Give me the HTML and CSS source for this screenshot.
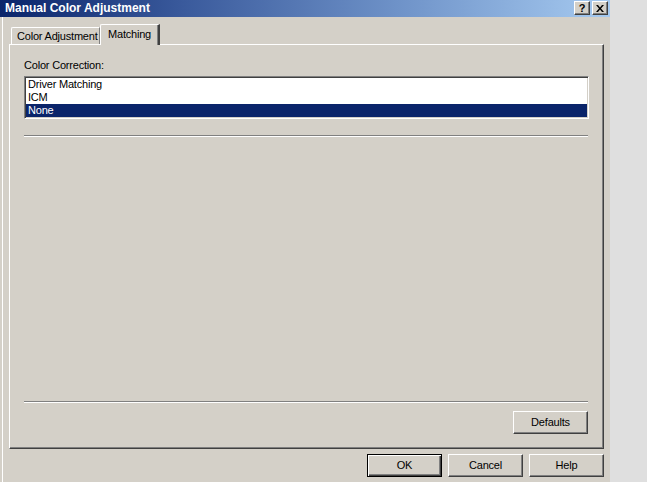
FILE: index.html
```html
<!DOCTYPE html>
<html>
<head>
<meta charset="utf-8">
<link rel="stylesheet" href="styles.css">
</head>
<body>
<div class="dialog">
  <div class="titlebar">
    <span class="title">Manual Color Adjustment</span>
    <div class="capbtns">
      <span class="capbtn help">?</span>
      <span class="capbtn close">
        <svg width="8" height="7" viewBox="0 0 8 7"><path d="M0 0h2l2 2.5L6 0h2L5 3.5 8 7H6L4 4.5 2 7H0l3-3.5z" fill="#000"/></svg>
      </span>
    </div>
  </div>
  <div class="content">
    <div class="tabs">
      <div class="tab">Color Adjustment</div>
      <div class="tab active">Matching</div>
    </div>
    <div class="panel">
      <div class="label">Color Correction:</div>
      <div class="listbox">
        <div class="item">Driver Matching</div>
        <div class="item">ICM</div>
        <div class="item selected">None</div>
      </div>
      <div class="sep top-sep"></div>
      <div class="spacer"></div>
      <div class="sep"></div>
      <div class="defaults-row">
        <button class="btn">Defaults</button>
      </div>
    </div>
    <div class="footer">
      <button class="btn default">OK</button>
      <button class="btn">Cancel</button>
      <button class="btn">Help</button>
    </div>
  </div>
</div>
</body>
</html>
```
FILE: styles.css
```css
html, body {
  margin: 0;
  padding: 0;
}
body {
  width: 647px;
  height: 482px;
  background: #dfdfdf;
  font-family: "Liberation Sans", Arial, sans-serif;
  font-size: 11px;
  line-height: 13px;
  letter-spacing: -0.2px;
  color: #000;
  overflow: hidden;
}
.dialog {
  width: 610px;
  height: 482px;
  background: linear-gradient(to right, #d4d0c8 2px, #ffffff 2px, #ffffff 3px, #d4d0c8 3px);
  display: flex;
  flex-direction: column;
}
.titlebar {
  height: 17px;
  flex: none;
  background: linear-gradient(to right, #0a246a 0%, #3a5a9c 30%, #6e92c8 65%, #a6caf0 100%);
  display: flex;
  align-items: flex-start;
  justify-content: space-between;
}
.title {
  color: #fff;
  font-weight: bold;
  font-size: 12px;
  letter-spacing: 0;
  line-height: 13px;
  padding: 2px 0 0 5px;
}
.capbtns {
  display: flex;
  gap: 2px;
  padding: 1px 2px 0 0;
}
.capbtn {
  box-sizing: border-box;
  width: 16px;
  height: 14px;
  background: #d4d0c8;
  border: 1px solid;
  border-color: #ffffff #404040 #404040 #ffffff;
  box-shadow: inset -1px -1px #808080;
  display: flex;
  align-items: center;
  justify-content: center;
  font-weight: bold;
  font-size: 11px;
  line-height: 11px;
  letter-spacing: 0;
}
.content {
  flex: 1;
  display: flex;
  flex-direction: column;
  padding: 7px 6px 0 9px;
}
.tabs {
  height: 20px;
  display: flex;
  align-items: flex-end;
  padding-left: 2px;
}
.tab {
  box-sizing: border-box;
  height: 17px;
  width: 89px;
  padding: 2px 0 0 5px;
  border-top: 1px solid #fff;
  border-left: 1px solid #fff;
  border-right: 1px solid #808080;
  border-top-left-radius: 2px;
  background: #d4d0c8;
  white-space: nowrap;
}
.tab.active {
  position: relative;
  z-index: 1;
  height: 21px;
  width: 60px;
  margin-bottom: -1px;
  padding: 3px 0 0 7px;
  border-right: 2px solid #404040;
  box-shadow: inset -1px 0 #808080;
}
.panel {
  box-sizing: border-box;
  width: 595px;
  height: 405px;
  border: 1px solid;
  border-color: #ffffff #404040 #404040 #ffffff;
  box-shadow: inset -1px -1px #808080;
  padding: 14px 15px 14px 14px;
  display: flex;
  flex-direction: column;
}
.label {
  height: 13px;
}
.listbox {
  box-sizing: border-box;
  margin-top: 4px;
  height: 43px;
  width: 565px;
  background: #fff;
  border: 1px solid;
  border-color: #808080 #ffffff #ffffff #808080;
  box-shadow: inset 1px 1px #404040, inset -1px -1px #d4d0c8;
  padding: 1px;
}
.item {
  height: 13px;
  padding-left: 2px;
}
.item.selected {
  background: #0a246a;
  color: #fff;
}
.sep {
  width: 564px;
  height: 0;
  border-top: 1px solid #808080;
  border-bottom: 1px solid #ffffff;
}
.top-sep {
  margin-top: 16px;
}
.spacer {
  flex: 1;
}
.defaults-row {
  display: flex;
  justify-content: flex-end;
  margin-top: 8px;
}
.btn {
  box-sizing: border-box;
  width: 75px;
  height: 23px;
  margin: 0;
  padding: 0;
  font-family: "Liberation Sans", Arial, sans-serif;
  font-size: 11px;
  line-height: 13px;
  letter-spacing: -0.2px;
  color: #000;
  background: #d4d0c8;
  border: 1px solid;
  border-color: #ffffff #404040 #404040 #ffffff;
  box-shadow: inset -1px -1px #808080;
  border-radius: 0;
}
.btn.default {
  border: 1px solid #000;
  box-shadow: inset 1px 1px #ffffff, inset -1px -1px #404040, inset -2px -2px #808080;
}
.footer {
  display: flex;
  justify-content: flex-end;
  gap: 6px;
  margin-top: 5px;
  width: 595px;
}
```
